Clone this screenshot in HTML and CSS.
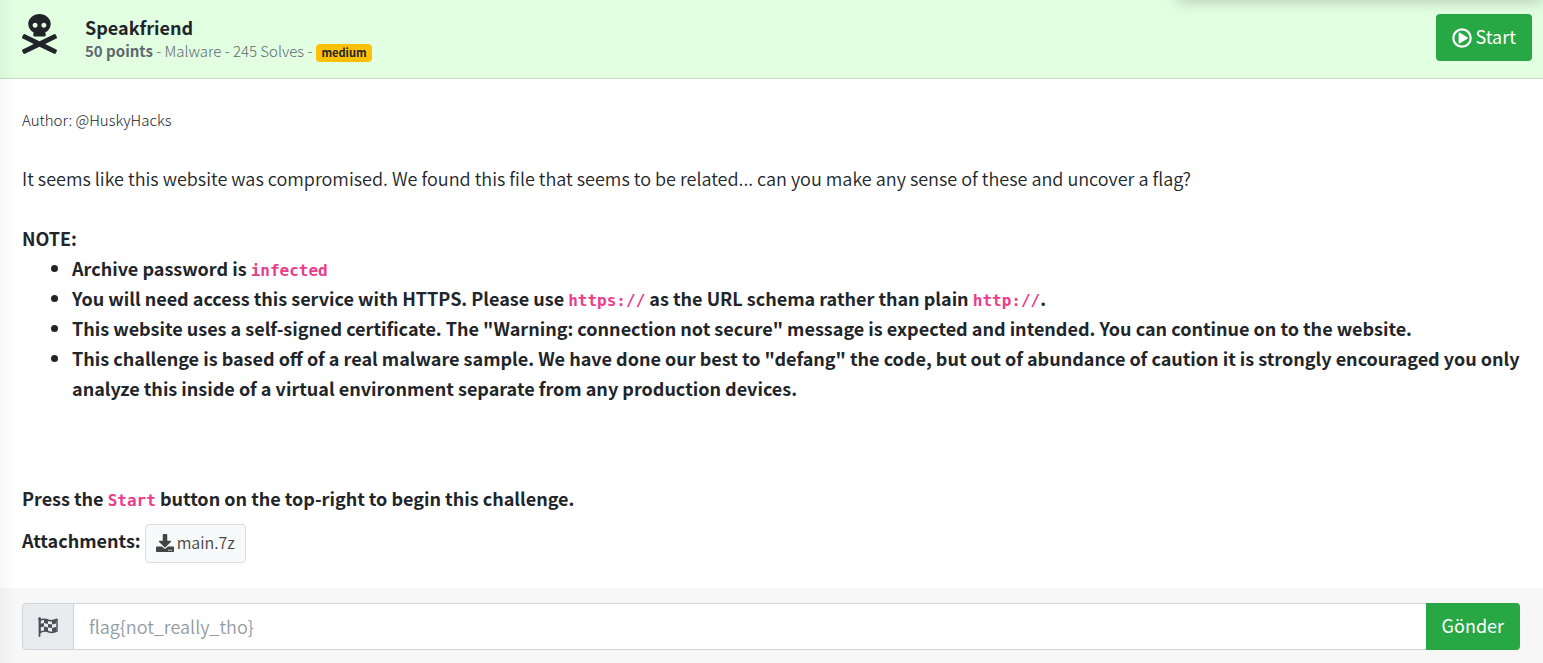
FILE: index.html
```html
<!DOCTYPE html>
<html lang="en">
<head>
<meta charset="utf-8">
<title>Speakfriend</title>
<link rel="stylesheet" href="styles.css">
</head>
<body>
<div class="top-shadow"></div>
<header class="header">
  <svg class="skull" viewBox="0 0 448 512" aria-hidden="true"><path d="M439.15 453.06L297.17 384l141.99-69.06c7.9-3.95 11.11-13.56 7.15-21.46L432 264.85c-3.95-7.9-13.56-11.11-21.47-7.16L224 348.41 37.47 257.69c-7.9-3.95-17.51-.75-21.47 7.16L1.69 293.48c-3.95 7.9-.75 17.51 7.15 21.46L150.83 384 8.85 453.06c-7.9 3.95-11.11 13.56-7.15 21.47l14.31 28.63c3.95 7.9 13.56 11.11 21.47 7.15L224 419.59l186.53 90.72c7.9 3.95 17.51.75 21.47-7.15l14.31-28.63c3.95-7.91.74-17.52-7.16-21.47zM150 237.28l-5.48 25.87c-2.67 12.62 5.42 24.85 16.45 24.85h126.08c11.03 0 19.12-12.23 16.45-24.85l-5.5-25.87c41.78-22.41 70-62.75 70-109.28C368 57.31 303.53 0 224 0S80 57.31 80 128c0 46.53 28.22 86.87 70 109.28zM280 112c17.65 0 32 14.35 32 32s-14.35 32-32 32-32-14.35-32-32 14.35-32 32-32zm-112 0c17.65 0 32 14.35 32 32s-14.35 32-32 32-32-14.35-32-32 14.35-32 32-32z"/></svg>
  <div class="heading">
    <h1 class="title">Speakfriend</h1>
    <div class="meta"><span><b>50 points</b> - Malware - 245 Solves -</span><span class="badge">medium</span></div>
  </div>
  <button class="btn start" type="button"><svg class="icon" viewBox="0 0 20 20" aria-hidden="true"><circle cx="10" cy="10" r="8.7" fill="none" stroke="currentColor" stroke-width="2.2"/><path d="M6.6 5.2v9.6a.7.7 0 0 0 1 .6l7.8-4.7a.8.8 0 0 0 0-1.4L7.6 4.6a.7.7 0 0 0-1 .6z"/></svg><span class="btn-text">Start</span></button>
</header>
<main class="content">
  <p class="author">Author: @HuskyHacks</p>
  <p class="text">It seems like this website was compromised. We found this file that seems to be related... can you make any sense of these and uncover a flag?</p>
  <div class="strong">NOTE:</div>
  <ul class="notes">
    <li>Archive password is <code>infected</code></li>
    <li>You will need access this service with HTTPS. Please use <code>https://</code> as the URL schema rather than plain <code>http://</code>.</li>
    <li>This website uses a self-signed certificate. The "Warning: connection not secure" message is expected and intended. You can continue on to the website.</li>
    <li>This challenge is based off of a real malware sample. We have done our best to "defang" the code, but out of abundance of caution it is strongly encouraged you only analyze this inside of a virtual environment separate from any production devices.</li>
  </ul>
  <div class="strong">Press the <code>Start</code> button on the top-right to begin this challenge.</div>
  <div class="attachments">
    <span class="strong">Attachments:</span>
    <a class="file" href="#"><svg class="dl" viewBox="0 0 512 512" aria-hidden="true"><path d="M216 0h80c13.3 0 24 10.7 24 24v168h87.7c17.8 0 26.7 21.5 14.1 34.1L269.7 378.3c-7.5 7.5-19.8 7.5-27.3 0L90.1 226.1c-12.6-12.6-3.7-34.1 14.1-34.1H192V24c0-13.3 10.7-24 24-24zm296 376v112c0 13.3-10.7 24-24 24H24c-13.3 0-24-10.7-24-24V376c0-13.3 10.7-24 24-24h146.7l49 49c20.1 20.1 52.5 20.1 72.6 0l49-49H488c13.3 0 24 10.7 24 24zm-124 88c0-11-9-20-20-20s-20 9-20 20 9 20 20 20 20-9 20-20zm64 0c0-11-9-20-20-20s-20 9-20 20 9 20 20 20 20-9 20-20z"/></svg>main.7z</a>
  </div>
</main>
<form class="footer">
  <label class="addon" for="flag" aria-label="Flag"><svg class="icon" viewBox="0 0 20 20" aria-hidden="true"><path d="M1.5 1.5V19" fill="none" stroke="currentColor" stroke-width="1.8" stroke-linecap="round"/><circle cx="1.7" cy="1.8" r="1.5"/><path d="M2 3.5C5 1.5 7.5 2 10.5 3.2S16 3.5 19 2.2V14C16 15.5 13.5 16 10.5 14.7S5 13.8 2 15.5z" fill="none" stroke="currentColor" stroke-width="1.5" stroke-linejoin="round"/><path d="M6 2.5l4 .8v3.6l-4-.9zM14 4l4-1v3.5l-4 1zM2 7l4-1v3.6l-4 1zM10 6.9l4 .6v3.5l-4-.6zM6 9.6l4 .8v4l-4-.7zM14 11l4-1v4.2l-4 .9z"/></svg></label>
  <input class="flag" id="flag" type="text" placeholder="flag{not_really_tho}">
  <button class="btn submit" type="button"><span class="btn-text">Gönder</span></button>
</form>
<div class="side-shadow"></div>
</body>
</html>
```
FILE: styles.css
```css
* { box-sizing: border-box; }
body {
  margin: 0;
  color: #212529;
  background: #fff;
  font-family: "Noto Sans CJK SC", "Noto Sans", sans-serif;
  font-size: 18px;
  font-weight: 350;
  line-height: 30px;
  overflow-x: hidden;
}
svg { fill: currentColor; flex: none; }
b { font-weight: 700; }
.top-shadow {
  position: absolute;
  top: -20px;
  left: 1178px;
  right: 0;
  height: 20px;
  box-shadow: 0 0 16px rgba(0, 0, 0, .25);
}
.side-shadow {
  position: absolute;
  top: 0;
  bottom: 0;
  left: 0;
  width: 16px;
  background: linear-gradient(to right, rgba(0, 0, 0, .03), transparent);
  pointer-events: none;
}
.header {
  display: flex;
  align-items: flex-start;
  padding: 14px 11px 17px 22px;
  background: #e2ffe2;
  border-bottom: 1px solid #c3dac3;
}
.skull { width: 35px; height: 40px; margin-right: 28px; }
.heading { flex: 1; }
.title { margin: 0; font-size: 18px; font-weight: 700; line-height: 26px; }
.meta { display: flex; gap: 4px; height: 21px; font-size: 15px; font-weight: 300; line-height: 21px; white-space: nowrap; color: #5f6870; }
.badge {
  align-self: center;
  margin-top: 4px;
  padding: 0 5px 1px;
  border-radius: 4px;
  background: #ffc107;
  color: #212529;
  font-size: 11px;
  font-weight: 700;
  line-height: 17px;
}
.btn {
  display: flex;
  align-items: center;
  gap: 4px;
  height: 47px;
  padding: 0 16px;
  border: 0;
  border-radius: 4px;
  background: #28a745;
  color: #fff;
  font: inherit;
  font-weight: 400;
}
.btn-text { padding-bottom: 3px; }
.icon { width: 20px; height: 20px; }
.content { padding: 26px 22px 25px; }
.author { margin: 0; font-size: 15px; font-weight: 300; }
.text { margin: 28px 0 30px; }
.strong { font-weight: 700; }
.notes { margin: 0 0 80px; padding-left: 50px; font-weight: 700; }
code {
  color: #e83e8c;
  font-family: "DejaVu Sans Mono", monospace;
  font-size: 16px;
  font-weight: 700;
  line-height: 1;
}
.attachments { display: flex; gap: 4px; margin-top: 11px; line-height: 33px; }
.file {
  display: flex;
  align-items: center;
  gap: 3px;
  height: 39px;
  padding: 0 10px 2px;
  border: 1px solid #ddd;
  border-radius: 4px;
  background: #f8f9fa;
  color: #444;
  font-size: 16px;
  text-decoration: none;
}
.dl { width: 18px; height: 18px; }
.footer { display: flex; padding: 15px 23px 13px 22px; background: #f7f7f7; }
.addon {
  display: flex;
  align-items: center;
  justify-content: center;
  width: 52px;
  border: 1px solid #ced4da;
  border-radius: 4px 0 0 4px;
  background: #e9ecef;
  color: #495057;
}
.flag {
  flex: 1;
  min-width: 0;
  height: 47px;
  padding: 0 15px 2px;
  border: 1px solid #ced4da;
  border-width: 1px 0;
  background: #fff;
  font: inherit;
}
.flag::placeholder { color: #939ba2; opacity: 1; }
.submit { border-radius: 0 4px 4px 0; }
```
